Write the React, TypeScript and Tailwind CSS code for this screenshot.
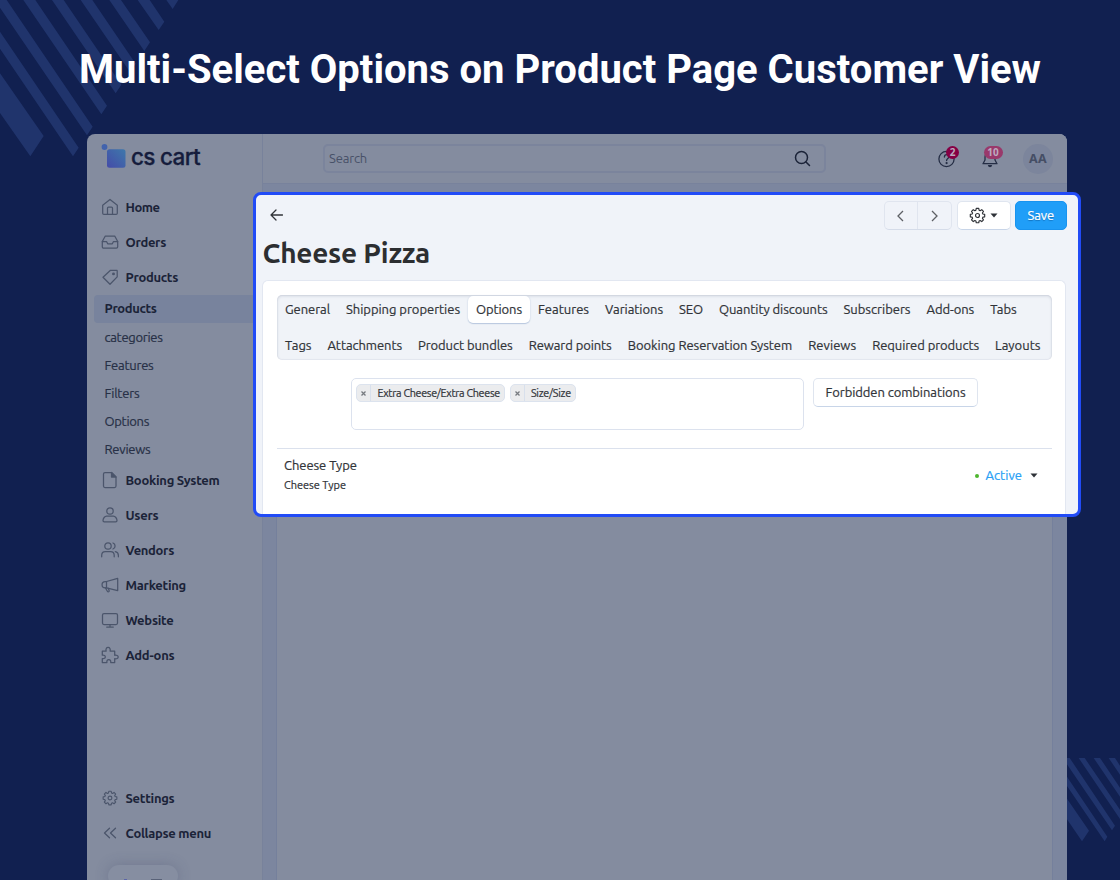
import { useLayoutEffect, useRef, useState, type ReactNode } from 'react';

/* Spreads a line of text over a fixed width by adjusting its letter spacing. */
function Fit({ text, width, className = '' }: { text: string; width: number; className?: string }) {
  const ref = useRef<HTMLSpanElement>(null);
  const [spacing, setSpacing] = useState(0);
  useLayoutEffect(() => {
    if (!ref.current) return;
    const natural = ref.current.getBoundingClientRect().width;
    setSpacing((width - natural) / text.length);
  }, [text, width]);
  return (
    <span className={`block shrink-0 whitespace-nowrap ${className}`} style={{ width }}>
      <span ref={ref} style={{ letterSpacing: `${spacing}px` }}>{text}</span>
    </span>
  );
}

function Icon({ children, size = 18, className = '' }: { children: ReactNode; size?: number; className?: string }) {
  return (
    <svg width={size} height={size} viewBox="0 0 18 18" fill="none" stroke="currentColor" strokeWidth="1.25" strokeLinecap="round" strokeLinejoin="round" className={`shrink-0 ${className}`}>
      {children}
    </svg>
  );
}

const gear = (
  <>
    <path d="M7.7 1.5h2.6l.4 1.9 1.1.5 1.7-1.1 1.8 1.8-1.1 1.7.5 1.1 1.9.4v2.6l-1.9.4-.5 1.1 1.1 1.7-1.8 1.8-1.7-1.1-1.1.5-.4 1.9H7.7l-.4-1.9-1.1-.5-1.7 1.1-1.8-1.8 1.1-1.7-.5-1.1-1.9-.4V7.800l1.9-.4.5-1.100-1.100-1.700 1.800-1.800 1.700 1.100 1.100-.5z" />
    <circle cx="9" cy="9" r="2.1" />
  </>
);

const mainItems = [
  { label: 'Booking System', width: 94, icon: <><path d="M4 1.500h6.500l4.500 4.500v9a1.500 1.500 0 0 1-1.500 1.500H4A1.500 1.500 0 0 1 2.500 15V3A1.500 1.500 0 0 1 4 1.500z" /><path d="M10.500 1.500V6H15z" fill="currentColor" /></> },
  { label: 'Users', width: 33, icon: <><circle cx="9" cy="5" r="3.200" /><path d="M5.500 10h7c1.600 0 3.500 2.500 3.500 4.500 0 .8-.6 1.300-1.300 1.300H3.300c-.7 0-1.300-.5-1.300-1.300C2 12.500 3.900 10 5.500 10z" /></> },
  { label: 'Vendors', width: 48.500, icon: <><circle cx="7" cy="5" r="3.200" /><path d="M.7 15.800v-1.500c0-2.300 1.500-3.800 3.600-3.800h5.300c2.200 0 3.600 1.500 3.600 3.800v1.500M12 2a3.200 3.200 0 0 1 0 6M14.300 10.700c1.900.4 3.100 2 3.100 3.900v1.200" /></> },
  { label: 'Marketing', width: 60.500, icon: <><path d="M5.500 5.500 16.700 2.300V14.600L5.500 11.800H4.200a3.150 3.150 0 0 1 0-6.300z" /><path d="M5.500 5.500v6.300M4.500 12l2 3.500c.5.700 2 .2 1.700-.7L7.300 12.300" /></> },
  { label: 'Website', width: 48, icon: <><rect x="1.500" y="2.500" width="15" height="11" rx="1.500" /><path d="M9 13.500v2.400M5.700 16h6.600" /></> },
  { label: 'Add-ons', width: 49, icon: <path d="M1.300 5.200h3.800c-.5-2.200.3-3.900 2-3.900s2.500 1.700 2 3.900h4.600v4.100c2-.3 3.500.3 3.500 1.700s-1.500 2.100-3.500 1.700v3.900H9.700c.3-1.900-.4-3-1.900-3s-2.200 1.100-1.900 3H1.300v-4.100c1.900.3 3-.3 3-1.600s-1.100-2-3-1.700z" /> },
];

const topItems = [
  { label: 'Home', width: 34, icon: <><path d="M1.700 7.200 9 1.500l7.300 5.700v8c0 .7-.5 1.200-1.200 1.200H2.900c-.7 0-1.200-.5-1.200-1.200z" /><path d="M6.500 16.300V10c0-.6.400-1 1-1h3c.6 0 1 .4 1 1v6.300" /></> },
  { label: 'Orders', width: 40.500, icon: <><path d="M4.300 3h9.400l3 5.500v5.300c0 .8-.6 1.400-1.400 1.400H2.700c-.8 0-1.400-.6-1.400-1.400V8.500z" /><path d="M1.300 8.500h4.200l1.200 2.300h4.600l1.200-2.300h4.200" /></> },
  { label: 'Products', width: 52.500, icon: <><path d="m2 9.300 7.500-7h6.200l.5.500v6.100L9 16.300z" strokeLinejoin="round" /><circle cx="12.500" cy="5.900" r=".8" fill="currentColor" /></> },
];

const subItems = [
  { label: 'categories', width: 58 },
  { label: 'Features', width: 49 },
  { label: 'Filters', width: 35 },
  { label: 'Options', width: 44.500 },
  { label: 'Reviews', width: 46 },
];

function NavRow({ label, width, icon }: { label: string; width: number; icon: ReactNode }) {
  return (
    <div className="flex h-[35px] items-center gap-[6.5px] pl-[14px] text-[#4b556b]">
      <Icon className="mb-px">{icon}</Icon>
      <Fit text={label} width={width} className="text-[13px] font-bold text-[#1b2338]" />
    </div>
  );
}

function Sidebar() {
  return (
    <aside className="flex w-[176px] shrink-0 flex-col border-r border-[#78829b]">
      <div className="flex h-[56px] shrink-0 items-start pt-[10px] pl-[14px]">
        <svg width="26" height="26" viewBox="0 0 26 26">
          <defs>
            <linearGradient id="mark" x1="0" y1="1" x2="1" y2="0">
              <stop offset="0" stopColor="#444ba8" />
              <stop offset="1" stopColor="#3e78ab" />
            </linearGradient>
          </defs>
          <circle cx="3.500" cy="3" r="2.900" fill="#4263ad" />
          <rect x="6" y="5.300" width="18.500" height="18.500" rx="2.500" fill="url(#mark)" />
        </svg>
        <Fit text="cs cart" width={69} className="ml-[4px] font-['Inter',sans-serif] text-[22.5px] leading-[26px] font-medium text-[#151c3c] [-webkit-text-stroke:0.3px_#151c3c]" />
      </div>
      <nav className="flex flex-col">
        {topItems.map((i) => <NavRow key={i.label} {...i} />)}
        <div className="ml-[7px] flex h-7 items-center rounded-l-[4px] bg-[#78839d] pl-[10.5px]">
          <Fit text="Products" width={52} className="text-[13px] font-bold text-[#1b2338]" />
        </div>
        {subItems.map((i) => (
          <div key={i.label} className="flex h-7 items-center pt-px pl-[17.5px]">
            <Fit text={i.label} width={i.width} className="text-[13px] text-[#273046] [-webkit-text-stroke:0.2px_#273046]" />
          </div>
        ))}
        {mainItems.map((i) => <NavRow key={i.label} {...i} />)}
      </nav>
      <div className="mt-[108px] flex flex-col">
        <NavRow label="Settings" width={49} icon={<g transform="translate(.9 .9) scale(.9)">{gear}</g>} />
        <NavRow label="Collapse menu" width={85.500} icon={<path d="m8.500 4.200-5 4.800 5 4.800M14.500 4.200l-5 4.800 5 4.800" />} />
      </div>
      <div className="mt-[14px] ml-[21px] flex h-[40px] w-[70px] items-start justify-between rounded-[18px] bg-[#868ea1] px-4 pt-[14px] shadow-[0_0_14px_rgba(60,70,105,0.28)]">
        <span className="h-2 w-[3px] bg-[#5b65a8]" />
        <span className="h-2 w-[11px] bg-[#596278]" />
      </div>
    </aside>
  );
}

function Header() {
  return (
    <header className="flex h-[50px] shrink-0 items-center border-b border-[#78829c] bg-[#848c9f] pl-[60px]">
      <div className="flex h-[29px] w-[503px] items-center justify-between rounded-[5px] border-2 border-[#7b849c] pr-[13px] pl-[4px]">
        <Fit text="Search" width={38} className="text-[13px] text-[#485168]" />
        <svg width="17" height="17" viewBox="0 0 17 17" fill="none" stroke="#1b2338" strokeWidth="1.500" strokeLinecap="round">
          <circle cx="7.500" cy="7.500" r="6" />
          <path d="m12 12 3.500 3.500" />
        </svg>
      </div>
      <div className="relative ml-[112px] size-[18px] text-[#252e45]">
        <Icon>
          <circle cx="8.500" cy="9" r="7.600" strokeWidth="1.300" />
          <path d="M6.400 7c0-3 4.500-3 4.500-.3 0 1.900-2.300 1.700-2.300 3.800" strokeWidth="1.300" />
          <circle cx="8.600" cy="13" r=".5" fill="currentColor" />
        </Icon>
        <span className="absolute -top-[4px] left-[8px] flex size-[13px] items-center justify-center rounded-full bg-[#850044] font-['Noto_Sans',sans-serif] text-[10px] leading-none font-bold text-[#b9a9bd]">2</span>
      </div>
      <div className="relative ml-[25px] size-[18px] text-[#252e45]">
        <Icon>
          <path d="M4 10V7a5 5 0 0 1 10 0v3l2 3.700H2z" strokeWidth="1.300" />
          <path d="M7.500 15.700c.6 1.100 2.400 1.100 3 0z" fill="currentColor" />
        </Icon>
        <span className="absolute -top-[4px] left-[2.5px] flex h-[13px] w-[19px] items-center justify-center rounded-full bg-[#99396b] font-['Noto_Sans',sans-serif] text-[10px] leading-none font-bold text-[#bdaabf]">10</span>
      </div>
      <div className="ml-[24px] flex size-[30px] items-center justify-center rounded-full bg-[#7c859c] pt-px">
        <Fit text="AA" width={18} className="font-['Noto_Sans',sans-serif] text-[12.5px] font-bold text-[#454e65]" />
      </div>
    </header>
  );
}

const tabRows = [
  [['General', 45], ['Shipping properties', 114], ['Options', 46], ['Features', 51], ['Variations', 58], ['SEO', 24], ['Quantity discounts', 108.5], ['Subscribers', 67], ['Add-ons', 47.7], ['Tabs', 26.5]],
  [['Tags', 26.5], ['Attachments', 74.5], ['Product bundles', 94.7], ['Reward points', 83], ['Booking Reservation System', 164.5], ['Reviews', 48], ['Required products', 106.8], ['Layouts', 45.5]],
] as [string, number][][];

function Tabs() {
  return (
    <div className="flex h-[65px] flex-col justify-between rounded-[5px] bg-[#f0f3f8] py-px shadow-[inset_0_1px_3px_rgba(70,85,115,0.2),inset_0_0_0_1px_rgba(70,85,115,0.04)]">
      {tabRows.map((row, r) => (
        <div key={r} className="flex h-[27px] items-center">
          {row.map(([label, width]) => (
            <div key={label} className={label === 'Options' ? 'flex h-[27px] items-center rounded-[5px] bg-white px-[8px] shadow-[0_1px_1px_#b9c8df,0_0_2px_#ccd6e5]' : 'flex h-[27px] items-center px-[8px]'}>
              <Fit text={label} width={width} className="text-[13px] text-[#303338] [-webkit-text-stroke:0.2px_#303338]" />
            </div>
          ))}
        </div>
      ))}
    </div>
  );
}

function Caret() {
  return <svg width="8" height="5" viewBox="0 0 8 5"><path d="M.5.500h7L4 4.500z" fill="#2e3238" /></svg>;
}

function Chip({ label, width }: { label: string; width: number }) {
  return (
    <div className="flex h-[18px] items-stretch overflow-hidden rounded-[5px] border border-[#dce3ee] bg-[#ebecee]">
      <span className="flex w-[14px] items-center justify-center border-r border-[#d8e0ec]">
        <svg width="5" height="5" viewBox="0 0 5 5" stroke="#777b80" strokeWidth="1.300"><path d="m.5.500 4 4m0-4-4 4" /></svg>
      </span>
      <Fit text={label} width={width} className="mr-[4px] ml-[6px] text-[10.8px] leading-[16px] text-[#303338] [-webkit-text-stroke:0.2px_#303338]" />
    </div>
  );
}

function EditorPanel() {
  return (
    <section className="absolute top-[192px] left-[253px] flex h-[325px] w-[828px] flex-col overflow-hidden rounded-[8px] border-[3px] border-[#214bf6] bg-[#f0f3f9]">
      <div className="flex items-center pt-[6px] pr-[11.5px] pl-[14px]">
        <svg width="14" height="12" viewBox="0 0 14 12" fill="none" stroke="#303338" strokeWidth="1.300" strokeLinecap="round" strokeLinejoin="round" className="mb-px"><path d="M6 1 1 6l5 5M1 6h11.500" /></svg>
        <div className="ml-auto flex h-[29px] w-[68px] rounded-[5px] border border-[#e0e5ef] border-b-[#d5dce9] text-[#5d6065]">
          <span className="flex flex-1 items-center justify-center border-r border-[#e0e5ef]"><svg width="7" height="12" viewBox="0 0 7 12" fill="none" stroke="currentColor" strokeWidth="1.300"><path d="M6 1 1 6l5 5" /></svg></span>
          <span className="flex flex-1 items-center justify-center"><svg width="7" height="12" viewBox="0 0 7 12" fill="none" stroke="currentColor" strokeWidth="1.300"><path d="m1 1 5 5-5 5" /></svg></span>
        </div>
        <button className="ml-[5px] flex h-[29px] w-[54px] items-center justify-center gap-[4px] rounded-[5px] border border-[#dfe5ef] border-b-[#c8d5e8] bg-white text-[#303338]">
          <Icon size={17}>{gear}</Icon>
          <Caret />
        </button>
        <button className="ml-[4.5px] flex h-[29px] w-[51.5px] items-center justify-center rounded-[5px] border border-[#1893ef] bg-[#209ef8]">
          <Fit text="Save" width={26.500} className="text-left text-[13px] text-white [text-shadow:0_1px_1px_rgba(0,60,120,0.45)] [-webkit-text-stroke:0.2px_#ffffff]" />
        </button>
      </div>
      <h2 className="flex h-[50px] shrink-0 items-center pb-[5px] pl-[6.5px]">
        <Fit text="Cheese Pizza" width={167.5} className="text-[28px] font-bold text-[#2c2e31]" />
      </h2>
      <div className="mr-[12px] ml-[6px] flex flex-1 flex-col rounded-t-[6px] border border-b-0 border-[#e2e7f1] bg-white pt-[14px] pr-[13px] pl-[14px]">
        <Tabs />
        <div className="flex items-start pt-[18px] pl-[74px]">
          <div className="flex h-[52px] w-[453px] items-start gap-[5px] rounded-[5px] border border-[#dce2ee] px-[4.4px] pt-[5px]">
            <Chip label="Extra Cheese/Extra Cheese" width={122.5} />
            <Chip label="Size/Size" width={40} />
          </div>
          <button className="ml-[9px] flex h-[29px] w-[165px] items-center justify-center rounded-[5px] border border-[#dfe5ef] border-b-[#c8d5e8] bg-white">
            <Fit text="Forbidden combinations" width={140} className="text-left text-[13px] text-[#303338] [-webkit-text-stroke:0.2px_#303338]" />
          </button>
        </div>
        <div className="mt-[18px] flex border-t border-[#dbe1ed] pl-[7px]">
          <div className="pt-[6px]">
            <Fit text="Cheese Type" width={73} className="text-[13px] leading-5 text-[#303338] [-webkit-text-stroke:0.2px_#303338]" />
            <Fit text="Cheese Type" width={62} className="text-[11px] leading-5 text-[#303338] [-webkit-text-stroke:0.2px_#303338]" />
          </div>
          <div className="mt-[16px] mr-[14px] ml-auto flex h-[21px] items-center">
            <span className="mt-px size-[4px] rounded-full bg-[#4eb62f]" />
            <Fit text="Active" width={36.500} className="ml-[6.5px] text-[13px] text-[#289ff5] [-webkit-text-stroke:0.2px_#289ff5]" />
            <span className="ml-[8px] flex"><Caret /></span>
          </div>
        </div>
      </div>
    </section>
  );
}

function Stripes() {
  return (
    <svg width="1120" height="880" viewBox="0 0 1120 880" className="absolute inset-0" fill="#20346c">
      <g transform="scale(.33333)">
        <path d="M0 339 91 469 131 408 0 220zM0 146 219 469 236 443 0 95zM-16 0 261 406 278 380 20 0zM70 0 304 343 321 317 106 0zM156 0 347 280 364 254 191 0zM242 0 390 216 407 191 277 0zM328 0 433 153 450 127 363 0zM413 0 476 90 493 65 449 0zM499 0 518 27 535 0z" />
      </g>
      <g transform="translate(940 740) scale(.33333)">
        <path d="M381 238 426 304 447 272 381 176zM381 138 494 304 502 290 381 110zM368 54 516 271 525 257 389 54zM416 54 540 237V209L434 54zM461 54 540 170V143L480 54zM506 54 540 104V77L525 54z" />
      </g>
    </svg>
  );
}

export default function App() {
  return (
    <main className="relative h-[880px] w-[1120px] overflow-hidden bg-[#112050] font-['Ubuntu','Noto_Sans',sans-serif]">
      <Stripes />
      <div className="relative flex h-[134px] justify-center pt-[46px]">
        <h1><Fit text="Multi-Select Options on Product Page Customer View" width={962} className="font-['Roboto',sans-serif] text-[40px] leading-[48px] font-bold text-white" /></h1>
      </div>
      <div className="relative mx-auto ml-[87px] flex h-[746px] w-[980px] overflow-hidden rounded-t-[8px] bg-[#848c9f]">
        <Sidebar />
        <div className="flex flex-1 flex-col bg-[#7c869f]">
          <Header />
          <div className="mt-[97px] mr-[14px] ml-[13px] flex-1 border-x border-[#75809c] bg-[#848c9f]" />
        </div>
      </div>
      <EditorPanel />
    </main>
  );
}
